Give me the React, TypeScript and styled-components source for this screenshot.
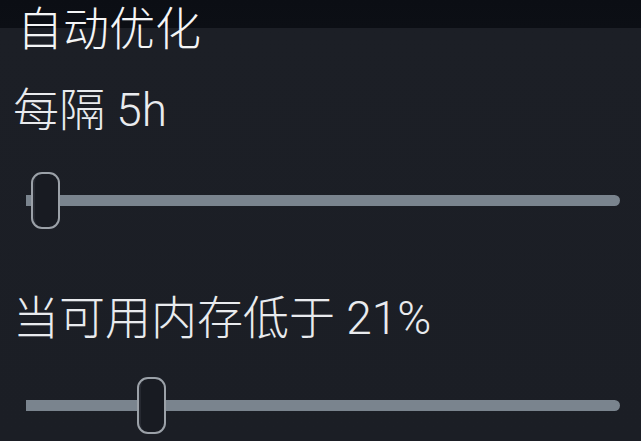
import React from "react";
import styled, { createGlobalStyle } from "styled-components";

const Global = createGlobalStyle`
  html, body {
    margin: 0;
    padding: 0;
    width: 641px;
    height: 441px;
    overflow: hidden;
    background: #1b1e25;
  }
  #root {
    width: 641px;
    height: 441px;
  }
`;

const Screen = styled.div`
  width: 641px;
  height: 441px;
  box-sizing: border-box;
  background: linear-gradient(to bottom, #0b0e14 0, #0c0f15 28px, #1c1f26 28px, #1b1e25 100%);
  font-family: Roboto, "Noto Sans CJK SC", sans-serif;
  color: #eef0f2;
  display: flex;
  flex-direction: column;
  overflow: hidden;
`;

const Title = styled.h1`
  margin: 6px 0 0 17px;
  font-size: 46px;
  line-height: 46px;
  font-weight: 300;
  color: #f4f5f6;
`;

const Section = styled.section<{ $top: number }>`
  margin-top: ${(p) => p.$top}px;
  display: flex;
  flex-direction: column;
`;

const Label = styled.div`
  margin-left: 13px;
  font-size: 46px;
  line-height: 46px;
  font-weight: 300;
  color: #e9ebee;
  white-space: nowrap;
`;

const SliderRoot = styled.div<{ $gap: number }>`
  position: relative;
  margin: ${(p) => p.$gap}px 0 0 26px;
  width: 594px;
  height: 57px;
  display: flex;
  align-items: center;
`;

const Track = styled.div`
  width: 100%;
  height: 11px;
  border-radius: 0 6px 6px 0;
  background: #7a848e;
`;

const Thumb = styled.div`
  position: absolute;
  top: 0;
  width: 29px;
  height: 57px;
  box-sizing: border-box;
  border: 2px solid #9ba1a8;
  border-radius: 11px;
  background: #181b22;
  box-shadow: inset 6px 0 0 -4px rgba(120, 130, 140, 0.15);
`;

function Slider({ left, gap }: { left: number; gap: number }) {
  return (
    <SliderRoot $gap={gap}>
      <Track />
      <Thumb style={{ left }} />
    </SliderRoot>
  );
}

export default function App() {
  return (
    <>
      <Global />
      <Screen>
        <Title>自动优化</Title>
        <Section $top={35}>
          <Label>每隔 5h</Label>
          <Slider left={5} gap={39} />
        </Section>
        <Section $top={66}>
          <Label>当可用内存低于 21%</Label>
          <Slider left={111} gap={36} />
        </Section>
      </Screen>
    </>
  );
}
